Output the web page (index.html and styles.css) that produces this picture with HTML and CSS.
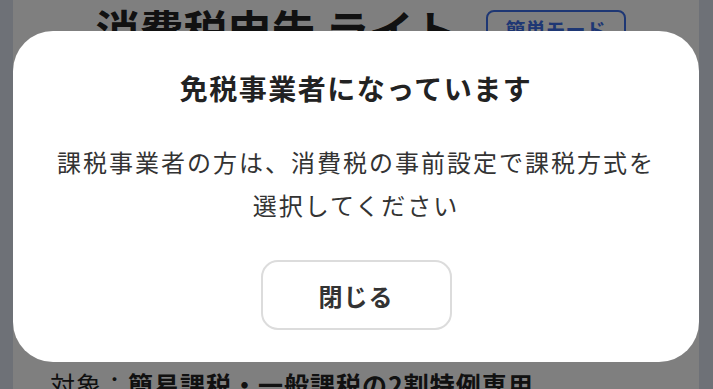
FILE: index.html
```html
<!DOCTYPE html>
<html lang="ja">
<head>
    <meta charset="UTF-8">
    <meta name="viewport" content="width=device-width, initial-scale=1.0">
    <title>消費税申告 ライト</title>
    <link rel="stylesheet" href="styles.css">
</head>
<body>
    <!-- page behind the dialog -->
    <div class="page">
        <div class="page-header">
            <h1 class="app-title">消費税申告 ライト</h1>
            <span class="mode-badge">簡単モード</span>
        </div>
        <div class="page-body">
            <p class="target">対象：<strong>簡易課税・一般課税の2割特例専用</strong></p>
        </div>
    </div>

    <!-- dialog -->
    <div class="overlay">
        <div class="modal">
            <h2 class="modal-title">免税事業者になっています</h2>
            <p class="modal-text">課税事業者の方は、消費税の事前設定で課税方式を<br>選択してください</p>
            <button class="close-btn" type="button">閉じる</button>
        </div>
    </div>
</body>
</html>
```

FILE: styles.css
```css
html, body {
    margin: 0;
    padding: 0;
    height: 100%;
    overflow: hidden;
}

body {
    background-color: #dde2ef;
    font-family: "Noto Sans CJK JP", "Noto Sans", sans-serif;
    color: #222;
}

.page {
    margin: 0 14px 0 13px;
    height: 100%;
    background-color: #fff;
}

.page-header {
    display: flex;
    align-items: center;
    justify-content: center;
    gap: 28px;
    padding-top: 2px;
    padding-left: 9px;
}

.app-title {
    margin: 0;
    font-size: 44px;
    font-weight: bold;
    line-height: 1.2;
    color: #222;
}

.mode-badge {
    font-size: 20px;
    font-weight: bold;
    color: #3d6ee8;
    border: 2px solid #3d6ee8;
    border-radius: 8px;
    padding: 4px 18px 10px;
    line-height: 1.4;
    margin-top: 8px;
}

.page-body {
    padding: 310px 0 0 37px;
}

.target {
    margin: 0;
    font-size: 25px;
    letter-spacing: 1px;
    color: #222;
}

.target strong {
    font-weight: bold;
}

.overlay {
    position: fixed;
    top: 0;
    left: 0;
    right: 0;
    bottom: 0;
    background-color: rgba(0, 0, 0, 0.5);
    display: flex;
    justify-content: center;
    align-items: flex-start;
    padding: 31px 14px 0 13px;
}

.modal {
    width: 100%;
    box-sizing: border-box;
    background-color: #fff;
    border-radius: 40px;
    padding: 38px 30px 32px;
    display: flex;
    flex-direction: column;
    align-items: center;
    text-align: center;
}

.modal-title {
    margin: 0;
    font-size: 28px;
    font-weight: bold;
    line-height: 39px;
    letter-spacing: 1.5px;
    color: #222;
}

.modal-text {
    margin: 32px 0 0;
    font-size: 24px;
    line-height: 43px;
    letter-spacing: 2px;
    color: #333;
}

.close-btn {
    margin-top: 34px;
    width: 191px;
    height: 70px;
    background-color: #fff;
    border: 2px solid #dcdcdc;
    border-radius: 17px;
    font-family: inherit;
    font-size: 24px;
    font-weight: bold;
    letter-spacing: 1px;
    color: #333;
}
```
